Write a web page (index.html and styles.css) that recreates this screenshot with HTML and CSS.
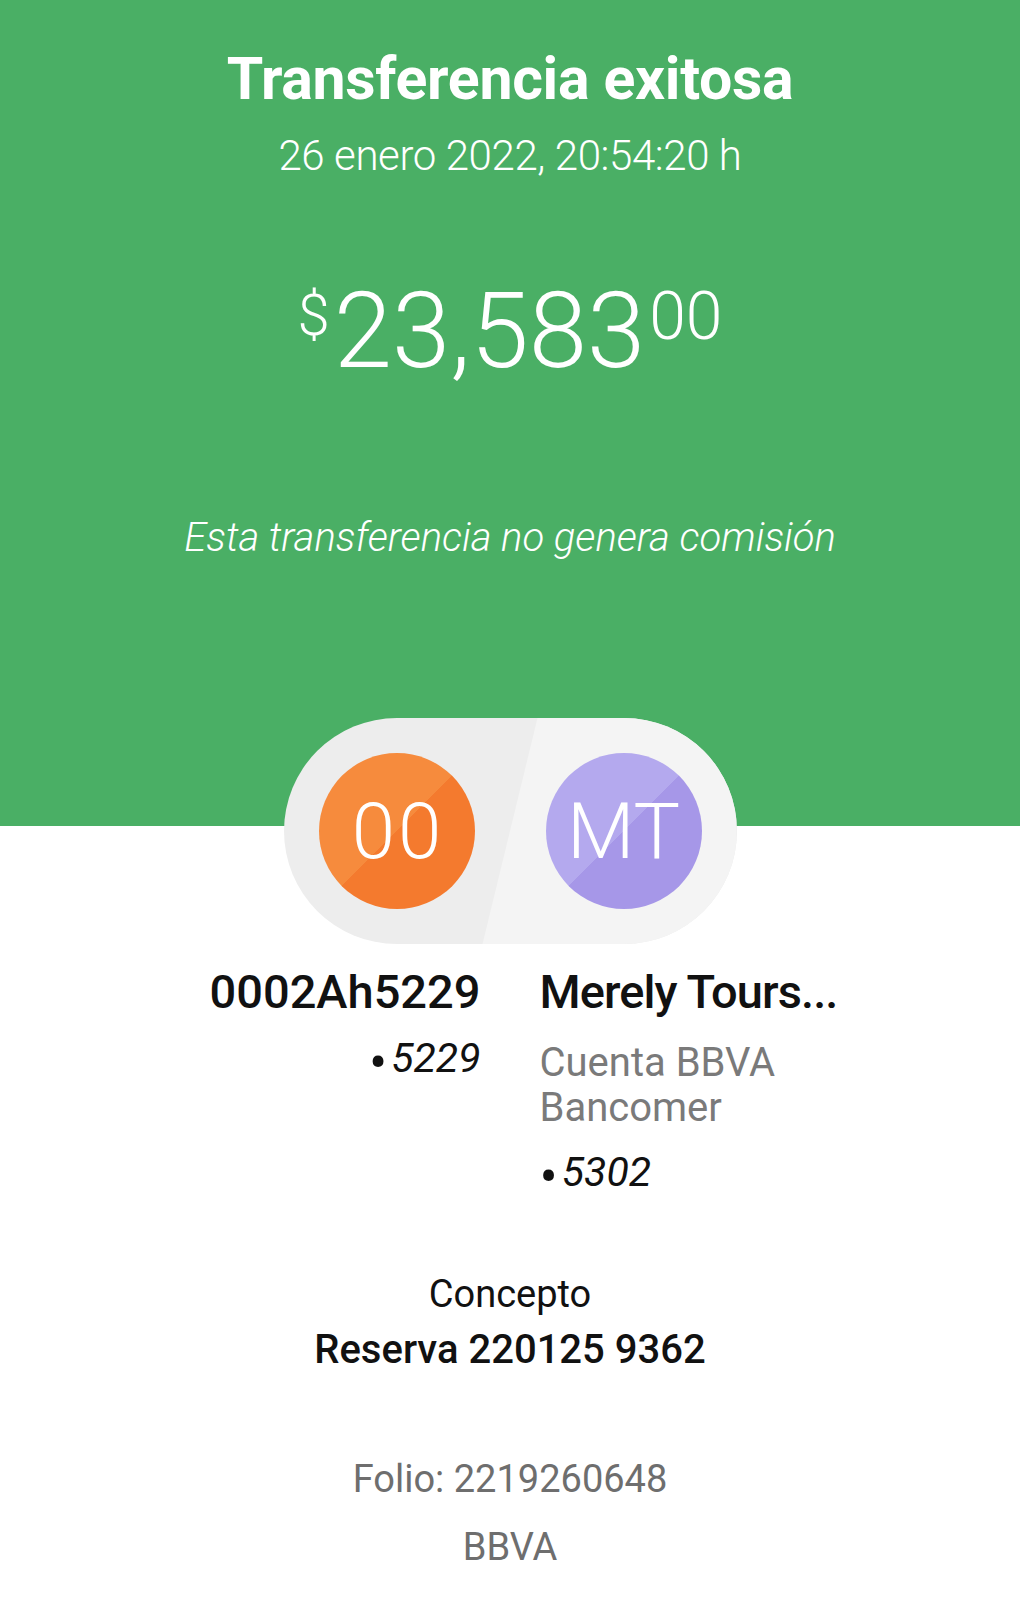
FILE: index.html
```html
<!DOCTYPE html>
<html lang="es">
<head>
    <meta charset="UTF-8">
    <meta name="viewport" content="width=device-width, initial-scale=1.0">
    <title>Transferencia exitosa</title>
    <link rel="stylesheet" href="styles.css">
</head>
<body>

<!-- Cabecera verde con el importe -->
<div class="hero">
    <h1 class="title">Transferencia exitosa</h1>
    <p class="date">26 enero 2022, 20:54:20 h</p>
    <div class="amount">
        <span class="amount-cur">$</span>
        <span class="amount-int">23,583</span>
        <span class="amount-dec">00</span>
    </div>
    <p class="note">Esta transferencia no genera comisión</p>
</div>

<!-- Origen y destino -->
<div class="pair">
    <div class="avatar avatar-orange">00</div>
    <div class="avatar avatar-purple">MT</div>
</div>

<div class="parties">
    <div class="party party-from">
        <h2 class="party-name">0002Ah5229</h2>
        <p class="party-acct"><span class="dot">•</span>5229</p>
    </div>
    <div class="party party-to">
        <h2 class="party-name party-name-to">Merely Tours...</h2>
        <p class="party-bank">Cuenta BBVA<br>Bancomer</p>
        <p class="party-acct party-acct-to"><span class="dot">•</span>5302</p>
    </div>
</div>

<div class="concept">
    <p class="concept-label">Concepto</p>
    <p class="concept-value">Reserva 220125 9362</p>
</div>

<div class="footer">
    <p class="folio">Folio: 2219260648</p>
    <p class="bank">BBVA</p>
</div>

</body>
</html>
```

FILE: styles.css
```css
/* Comprobante de transferencia */
body {
    margin: 0;
    background-color: #ffffff;
    font-family: Roboto, "Noto Sans", sans-serif;
    color: #111111;
}
p, h1, h2 {
    margin: 0;
}

/* Cabecera verde */
.hero {
    background-color: #4aaf65;
    color: #ffffff;
    text-align: center;
    padding-top: 45px;
    height: 826px;
    box-sizing: border-box;
}
.title {
    font-weight: bold;
    font-size: 59px;
    line-height: 68px;
    letter-spacing: -0.3px;
}
.date {
    margin-top: 18px;
    font-weight: 300;
    font-size: 42px;
    line-height: 50px;
    letter-spacing: -0.4px;
}
.amount {
    display: flex;
    justify-content: center;
    align-items: flex-start;
    margin-top: 98px;
    font-weight: 300;
}
.amount-cur {
    font-size: 58px;
    line-height: 56px;
    margin-top: 8px;
    margin-right: 4px;
}
.amount-int {
    font-size: 105px;
    line-height: 105px;
}
.amount-dec {
    font-size: 66px;
    line-height: 66px;
    margin-top: 5px;
    margin-left: 4px;
}
.note {
    margin-top: 131px;
    font-style: italic;
    font-weight: 300;
    font-size: 40px;
    line-height: 46px;
}

/* Pastilla con los avatares */
.pair {
    position: relative;
    display: flex;
    justify-content: space-between;
    width: 453px;
    margin: -108px auto 0;
    padding: 35px;
    box-sizing: border-box;
    border-radius: 113px;
    overflow: hidden;
    background-color: #ededed;
}
.pair::before {
    content: "";
    position: absolute;
    top: 0;
    right: 0;
    bottom: 0;
    left: 0;
    background-color: #f4f4f4;
    clip-path: polygon(254px 0, 100% 0, 100% 100%, 199px 100%);
}
.avatar {
    position: relative;
    width: 156px;
    height: 156px;
    border-radius: 50%;
    display: flex;
    align-items: center;
    justify-content: center;
    color: #ffffff;
    font-weight: 300;
    font-size: 78px;
}
.avatar-orange {
    background: linear-gradient(135deg, #f68b3d 50%, #f47a2e 50%);
    letter-spacing: 3px;
    text-indent: 3px;
}
.avatar-purple {
    background: linear-gradient(135deg, #b4a9ee 50%, #a697e8 50%);
}

/* Nombres y cuentas */
.parties {
    display: grid;
    grid-template-columns: minmax(0, 1fr) minmax(0, 1fr);
    column-gap: 59px;
    width: 680px;
    margin: 20px auto 0;
}
.party-from {
    text-align: right;
}
.party-name {
    font-weight: 500;
    font-size: 47px;
    line-height: 56px;
    white-space: nowrap;
}
.party-name-to {
    letter-spacing: -0.9px;
}
.party-acct {
    margin-top: 16px;
    font-style: italic;
    font-size: 41px;
    line-height: 45px;
}
.party-acct-to {
    margin-top: 20px;
}
.party-acct .dot {
    font-style: normal;
    font-size: 54px;
    line-height: 0;
    vertical-align: -9px;
    margin-right: 4px;
}
.party-bank {
    margin-top: 20px;
    color: #7a7a7a;
    font-size: 40px;
    line-height: 45px;
}

/* Concepto */
.concept {
    margin-top: 76px;
    text-align: center;
}
.concept-label {
    font-size: 38px;
    line-height: 46px;
}
.concept-value {
    margin-top: 10px;
    font-weight: 500;
    font-size: 40px;
    line-height: 46px;
}

/* Pie */
.footer {
    margin-top: 83px;
    text-align: center;
    color: #6e6e6e;
    font-size: 38px;
    line-height: 46px;
}
.bank {
    margin-top: 22px;
}
```
